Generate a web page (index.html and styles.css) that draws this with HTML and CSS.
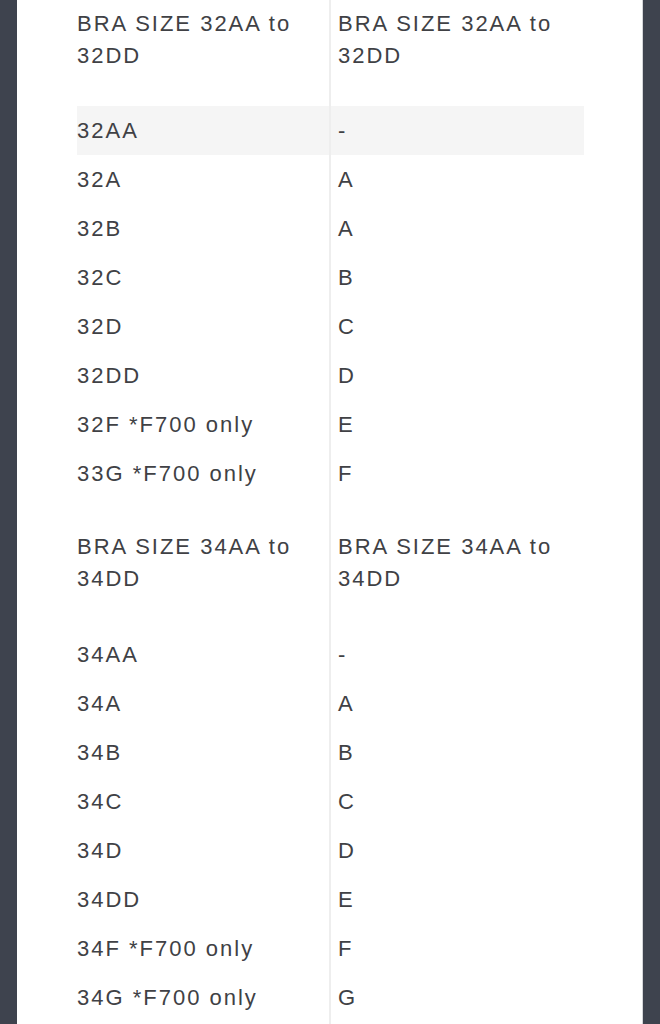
FILE: index.html
```html
<!DOCTYPE html>
<html lang="en">
<head>
<meta charset="utf-8">
<title>Bra size chart</title>
<link rel="stylesheet" href="styles.css">
</head>
<body>
<div class="sheet">
  <table class="sizes">
    <colgroup>
      <col class="col1">
      <col class="col2">
    </colgroup>
    <tbody>
      <tr class="head first">
        <td class="c1">BRA SIZE 32AA to 32DD</td>
        <td class="c2">BRA SIZE 32AA to 32DD</td>
      </tr>
      <tr class="hl"><td class="c1">32AA</td><td class="c2">-</td></tr>
      <tr><td class="c1">32A</td><td class="c2">A</td></tr>
      <tr><td class="c1">32B</td><td class="c2">A</td></tr>
      <tr><td class="c1">32C</td><td class="c2">B</td></tr>
      <tr><td class="c1">32D</td><td class="c2">C</td></tr>
      <tr><td class="c1">32DD</td><td class="c2">D</td></tr>
      <tr><td class="c1">32F *F700 only</td><td class="c2">E</td></tr>
      <tr><td class="c1">33G *F700 only</td><td class="c2">F</td></tr>
      <tr class="head">
        <td class="c1">BRA SIZE 34AA to 34DD</td>
        <td class="c2">BRA SIZE 34AA to 34DD</td>
      </tr>
      <tr><td class="c1">34AA</td><td class="c2">-</td></tr>
      <tr><td class="c1">34A</td><td class="c2">A</td></tr>
      <tr><td class="c1">34B</td><td class="c2">B</td></tr>
      <tr><td class="c1">34C</td><td class="c2">C</td></tr>
      <tr><td class="c1">34D</td><td class="c2">D</td></tr>
      <tr><td class="c1">34DD</td><td class="c2">E</td></tr>
      <tr><td class="c1">34F *F700 only</td><td class="c2">F</td></tr>
      <tr class="last"><td class="c1">34G *F700 only</td><td class="c2">G</td></tr>
    </tbody>
  </table>
</div>
</body>
</html>
```

FILE: styles.css
```css
html, body {
  margin: 0;
  padding: 0;
  background: #3e434e;
  height: 1024px;
  overflow: hidden;
}

.sheet {
  box-sizing: border-box;
  margin: 0 17px;
  background: #ffffff;
  border-right: 1px solid #d4d6d9;
  min-height: 1024px;
  padding-left: 60px;
}

.sizes {
  border-collapse: collapse;
  border-spacing: 0;
  width: 507px;
  table-layout: fixed;
  font-family: "Liberation Sans", Arial, sans-serif;
  font-size: 22px;
  line-height: 32px;
  letter-spacing: 2px;
  color: #404145;
}

.sizes .col1 {
  width: 253px;
}

.sizes td {
  vertical-align: top;
  padding: 8.5px 0 8.5px 0;
}

.sizes .c2 {
  border-left: 2px solid #eeeeee;
  padding-left: 7px;
}

.sizes .head td {
  padding-top: 33px;
  padding-bottom: 35px;
}

.sizes .head.first td {
  padding-top: 7.5px;
  padding-bottom: 34.5px;
}

.sizes .last td {
  padding-bottom: 30px;
}

.sizes .hl td {
  background: #f5f5f5;
}
```
